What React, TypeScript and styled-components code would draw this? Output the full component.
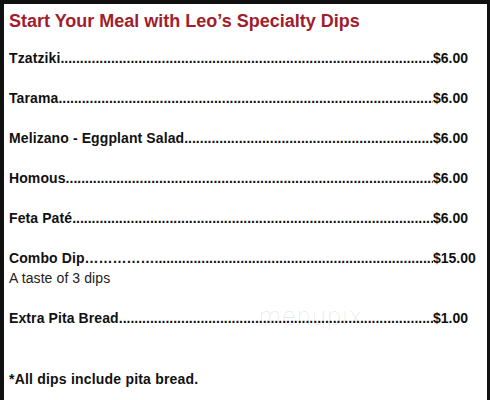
import styled, { createGlobalStyle } from 'styled-components';

interface Dip {
  name: string;
  price: string;
  note?: string;
  lead?: string;
}

const dips: Dip[] = [
  { name: 'Tzatziki', price: '$6.00' },
  { name: 'Tarama', price: '$6.00' },
  { name: 'Melizano - Eggplant Salad', price: '$6.00' },
  { name: 'Homous', price: '$6.00' },
  { name: 'Feta Paté', price: '$6.00' },
  { name: 'Combo Dip', price: '$15.00', note: 'A taste of 3 dips', lead: '……………' },
  { name: 'Extra Pita Bread', price: '$1.00' },
];

const DOTS = '.'.repeat(160);

export default function App() {
  return (
    <>
      <GlobalStyle />
      <Frame>
        <Sheet>
          <Title>Start Your Meal with Leo’s Specialty Dips</Title>
          <List>
            {dips.map(dip => (
              <Item key={dip.name}>
                <Row>
                  <Name>{dip.name}</Name>
                  <Leader $lead={dip.lead ?? ''} />
                  <Price>{dip.price}</Price>
                </Row>
                {dip.note && <Note>{dip.note}</Note>}
              </Item>
            ))}
          </List>
          <Footnote>*All dips include pita bread.</Footnote>
          <Watermark>menupix</Watermark>
        </Sheet>
      </Frame>
    </>
  );
}

const GlobalStyle = createGlobalStyle`
  html, body {
    margin: 0;
    padding: 0;
    background: #111;
  }
  body {
    font-family: "Liberation Sans", Arial, sans-serif;
  }
`;

const Frame = styled.div`
  width: 490px;
  height: 400px;
  box-sizing: border-box;
  border-top: 4px solid #111;
  border-left: 4px solid #111;
  border-right: 3px solid #111;
  background: #fff;
  overflow: hidden;
`;

const Sheet = styled.div`
  position: relative;
  padding: 6px 0 0 5px;
  color: #111;
`;

const Title = styled.h1`
  margin: 0;
  font-size: 18px;
  line-height: 22px;
  font-weight: bold;
  color: #a11d2b;
`;

const List = styled.div`
  display: flex;
  flex-direction: column;
  gap: 20px;
  margin-top: 16px;
`;

const Item = styled.div`
  display: flex;
  flex-direction: column;
`;

const Row = styled.div`
  display: flex;
  width: 460px;
  font-size: 14px;
  line-height: 20px;
  font-weight: bold;
  white-space: nowrap;
`;

const Name = styled.span`
  flex: none;
  letter-spacing: 0.1px;
`;

const Leader = styled.span<{ $lead: string }>`
  flex: 1;
  min-width: 0;
  overflow: hidden;

  &::before {
    content: '${p => p.$lead}${DOTS}';
  }
`;

const Price = styled.span`
  flex: none;
  width: 36px;
  overflow: visible;
`;

const Note = styled.div`
  font-size: 14px;
  line-height: 20px;
  letter-spacing: 0.1px;
  color: #222;
`;

const Footnote = styled.p`
  margin: 41px 0 0;
  font-size: 14px;
  line-height: 20px;
  font-weight: bold;
  letter-spacing: 0.2px;
`;

const Watermark = styled.div`
  position: absolute;
  left: 254px;
  top: 299px;
  font-size: 24px;
  font-weight: 300;
  color: rgba(0, 0, 0, 0.09);
  font-family: "DejaVu Sans", sans-serif;
  pointer-events: none;
`;
